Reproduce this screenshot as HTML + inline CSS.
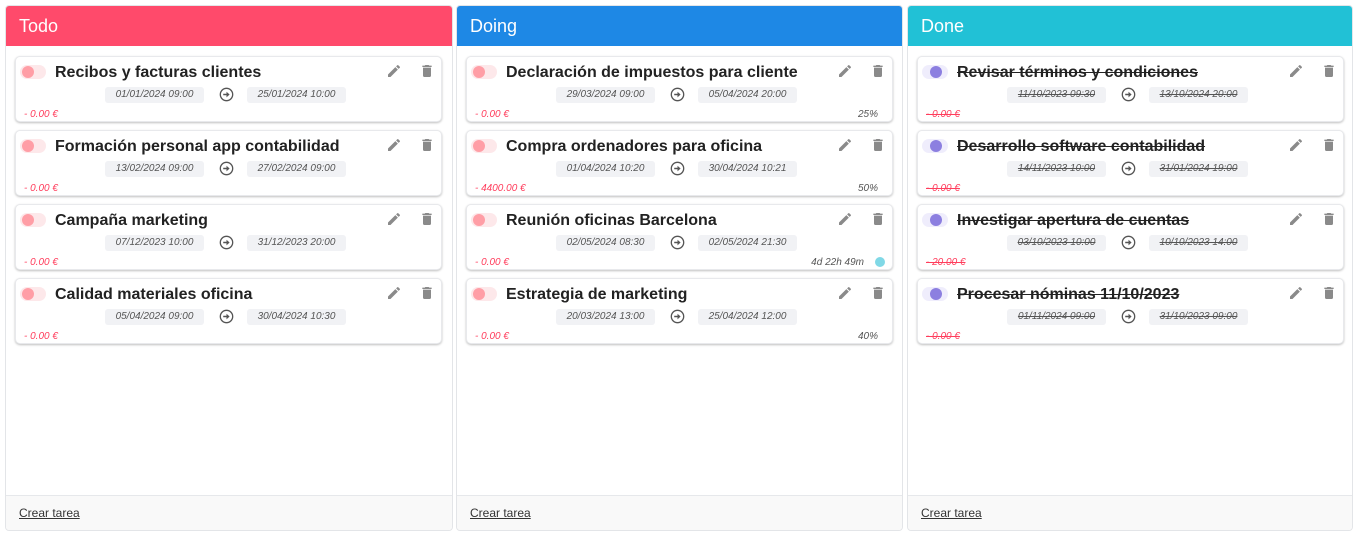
<!DOCTYPE html>
<html><head><meta charset="utf-8"><style>
*{box-sizing:border-box;margin:0;padding:0}
body{width:1353px;height:537px;background:#fff;font-family:"Liberation Sans",sans-serif;position:relative;overflow:hidden}
.col{position:absolute;top:5px;height:526px;border:1px solid #e3e5e8;border-radius:4px;background:#fff;overflow:hidden}
.hd{height:40px;color:#fff;font-size:18px;padding:10px 0 0 13px}
.ft{position:absolute;left:0;right:0;bottom:0;height:35px;background:#f9f9f9;border-top:1px solid #e6e8eb}
.ft a{position:absolute;left:13px;top:10px;font-size:12px;color:#333;text-decoration:underline}
.card{position:absolute;left:10px;right:10px;height:66px;border:1px solid #e8e9ec;border-radius:5px;box-shadow:0 1px 2px rgba(0,0,0,.25);background:#fff}
.tg{position:absolute;left:4px;top:8px;width:26px;height:14px;border-radius:7px;background:#fde8ea}
.tg i{position:absolute;left:2px;top:1px;width:12px;height:12px;border-radius:50%;background:#ff9ea6}
.done .tg{background:#efedfc}.done .tg i{background:#8c7fe0;left:8px}
.t{position:absolute;left:39px;top:7px;font-size:16px;font-weight:bold;color:#222;white-space:nowrap}
.done .t,.done .d,.done .am{text-decoration:line-through}
.d{position:absolute;top:30px;width:99px;height:16px;background:#f1f2f5;border-radius:3px;font-size:10px;font-style:italic;color:#555;text-align:center;line-height:16px}
.ar{position:absolute;left:203px;top:30px}
.am{position:absolute;left:8px;top:52px;font-size:10px;font-style:italic;color:#ff3d5c}
.pc{position:absolute;right:14px;top:52px;font-size:10px;font-style:italic;color:#555}
.ed{position:absolute;left:370px;top:6px}
.tr{position:absolute;left:403px;top:6px}
</style></head><body>
<div class="col" style="left:5px;width:448px"><div class="hd" style="background:#ff4a6b">Todo</div>
<div class="ft"><a>Crear tarea</a></div></div>
<div class="col" style="left:456px;width:447px"><div class="hd" style="background:#1e88e5">Doing</div>
<div class="ft"><a>Crear tarea</a></div></div>
<div class="col" style="left:907px;width:446px"><div class="hd" style="background:#21c1d6">Done</div>
<div class="ft"><a>Crear tarea</a></div></div>
<div id="cards"></div>
<script>
const cols=[[5,[["Recibos y facturas clientes","01/01/2024 09:00","25/01/2024 10:00","- 0.00 €",""],["Formación personal app contabilidad","13/02/2024 09:00","27/02/2024 09:00","- 0.00 €",""],["Campaña marketing","07/12/2023 10:00","31/12/2023 20:00","- 0.00 €",""],["Calidad materiales oficina","05/04/2024 09:00","30/04/2024 10:30","- 0.00 €",""]],""],
[456,[["Declaración de impuestos para cliente","29/03/2024 09:00","05/04/2024 20:00","- 0.00 €","25%"],["Compra ordenadores para oficina","01/04/2024 10:20","30/04/2024 10:21","- 4400.00 €","50%"],["Reunión oficinas Barcelona","02/05/2024 08:30","02/05/2024 21:30","- 0.00 €","dot"],["Estrategia de marketing","20/03/2024 13:00","25/04/2024 12:00","- 0.00 €","40%"]],""],
[907,[["Revisar términos y condiciones","11/10/2023 09:30","13/10/2024 20:00","- 0.00 €",""],["Desarrollo software contabilidad","14/11/2023 10:00","31/01/2024 19:00","- 0.00 €",""],["Investigar apertura de cuentas","03/10/2023 10:00","10/10/2023 14:00","- 20.00 €",""],["Procesar nóminas 11/10/2023","01/11/2024 09:00","31/10/2023 09:00","- 0.00 €",""]],"done"]];
const pen='<svg width="16" height="16" viewBox="0 0 24 24"><path fill="#8a8a8a" d="M3 17.25V21h3.75L17.81 9.94l-3.75-3.75L3 17.25zM20.71 7.04a1 1 0 000-1.41l-2.34-2.34a1 1 0 00-1.41 0l-1.83 1.83 3.75 3.75 1.83-1.83z"/></svg>';
const bin='<svg width="16" height="16" viewBox="0 0 24 24"><path fill="#8a8a8a" d="M6 19c0 1.1.9 2 2 2h8c1.1 0 2-.9 2-2V7H6v12zM19 4h-3.5l-1-1h-5l-1 1H5v2h14V4z"/></svg>';
const arr='<svg width="15" height="15" viewBox="0 0 16 16"><circle cx="8" cy="8" r="6.6" fill="none" stroke="#555" stroke-width="1.4"/><path d="M4.5 8h5" stroke="#555" stroke-width="1.6"/><path d="M8 5l3.3 3L8 11z" fill="#555"/></svg>';
let h='';
cols.forEach(([x,cs,cl])=>{cs.forEach((c,i)=>{
let extra='';
if(c[4]=='dot')extra='<div class="pc" style="right:28px">4d 22h 49m</div><div style="position:absolute;left:408px;top:52px;width:10px;height:10px;border-radius:50%;background:#80d8e6"></div>';
else if(c[4])extra='<div class="pc">'+c[4]+'</div>';
h+=`<div class="card ${cl}" style="left:${x+10}px;width:427px;top:${56+i*74}px"><div class="tg"><i></i></div><div class="t">${c[0]}</div><div class="ed">${pen}</div><div class="tr">${bin}</div><div class="d" style="left:89px">${c[1]}</div><div class="ar">${arr}</div><div class="d" style="left:231px">${c[2]}</div><div class="am">${c[3]}</div>${extra}</div>`;
});});
document.getElementById('cards').innerHTML=h;
</script>
</body></html>
